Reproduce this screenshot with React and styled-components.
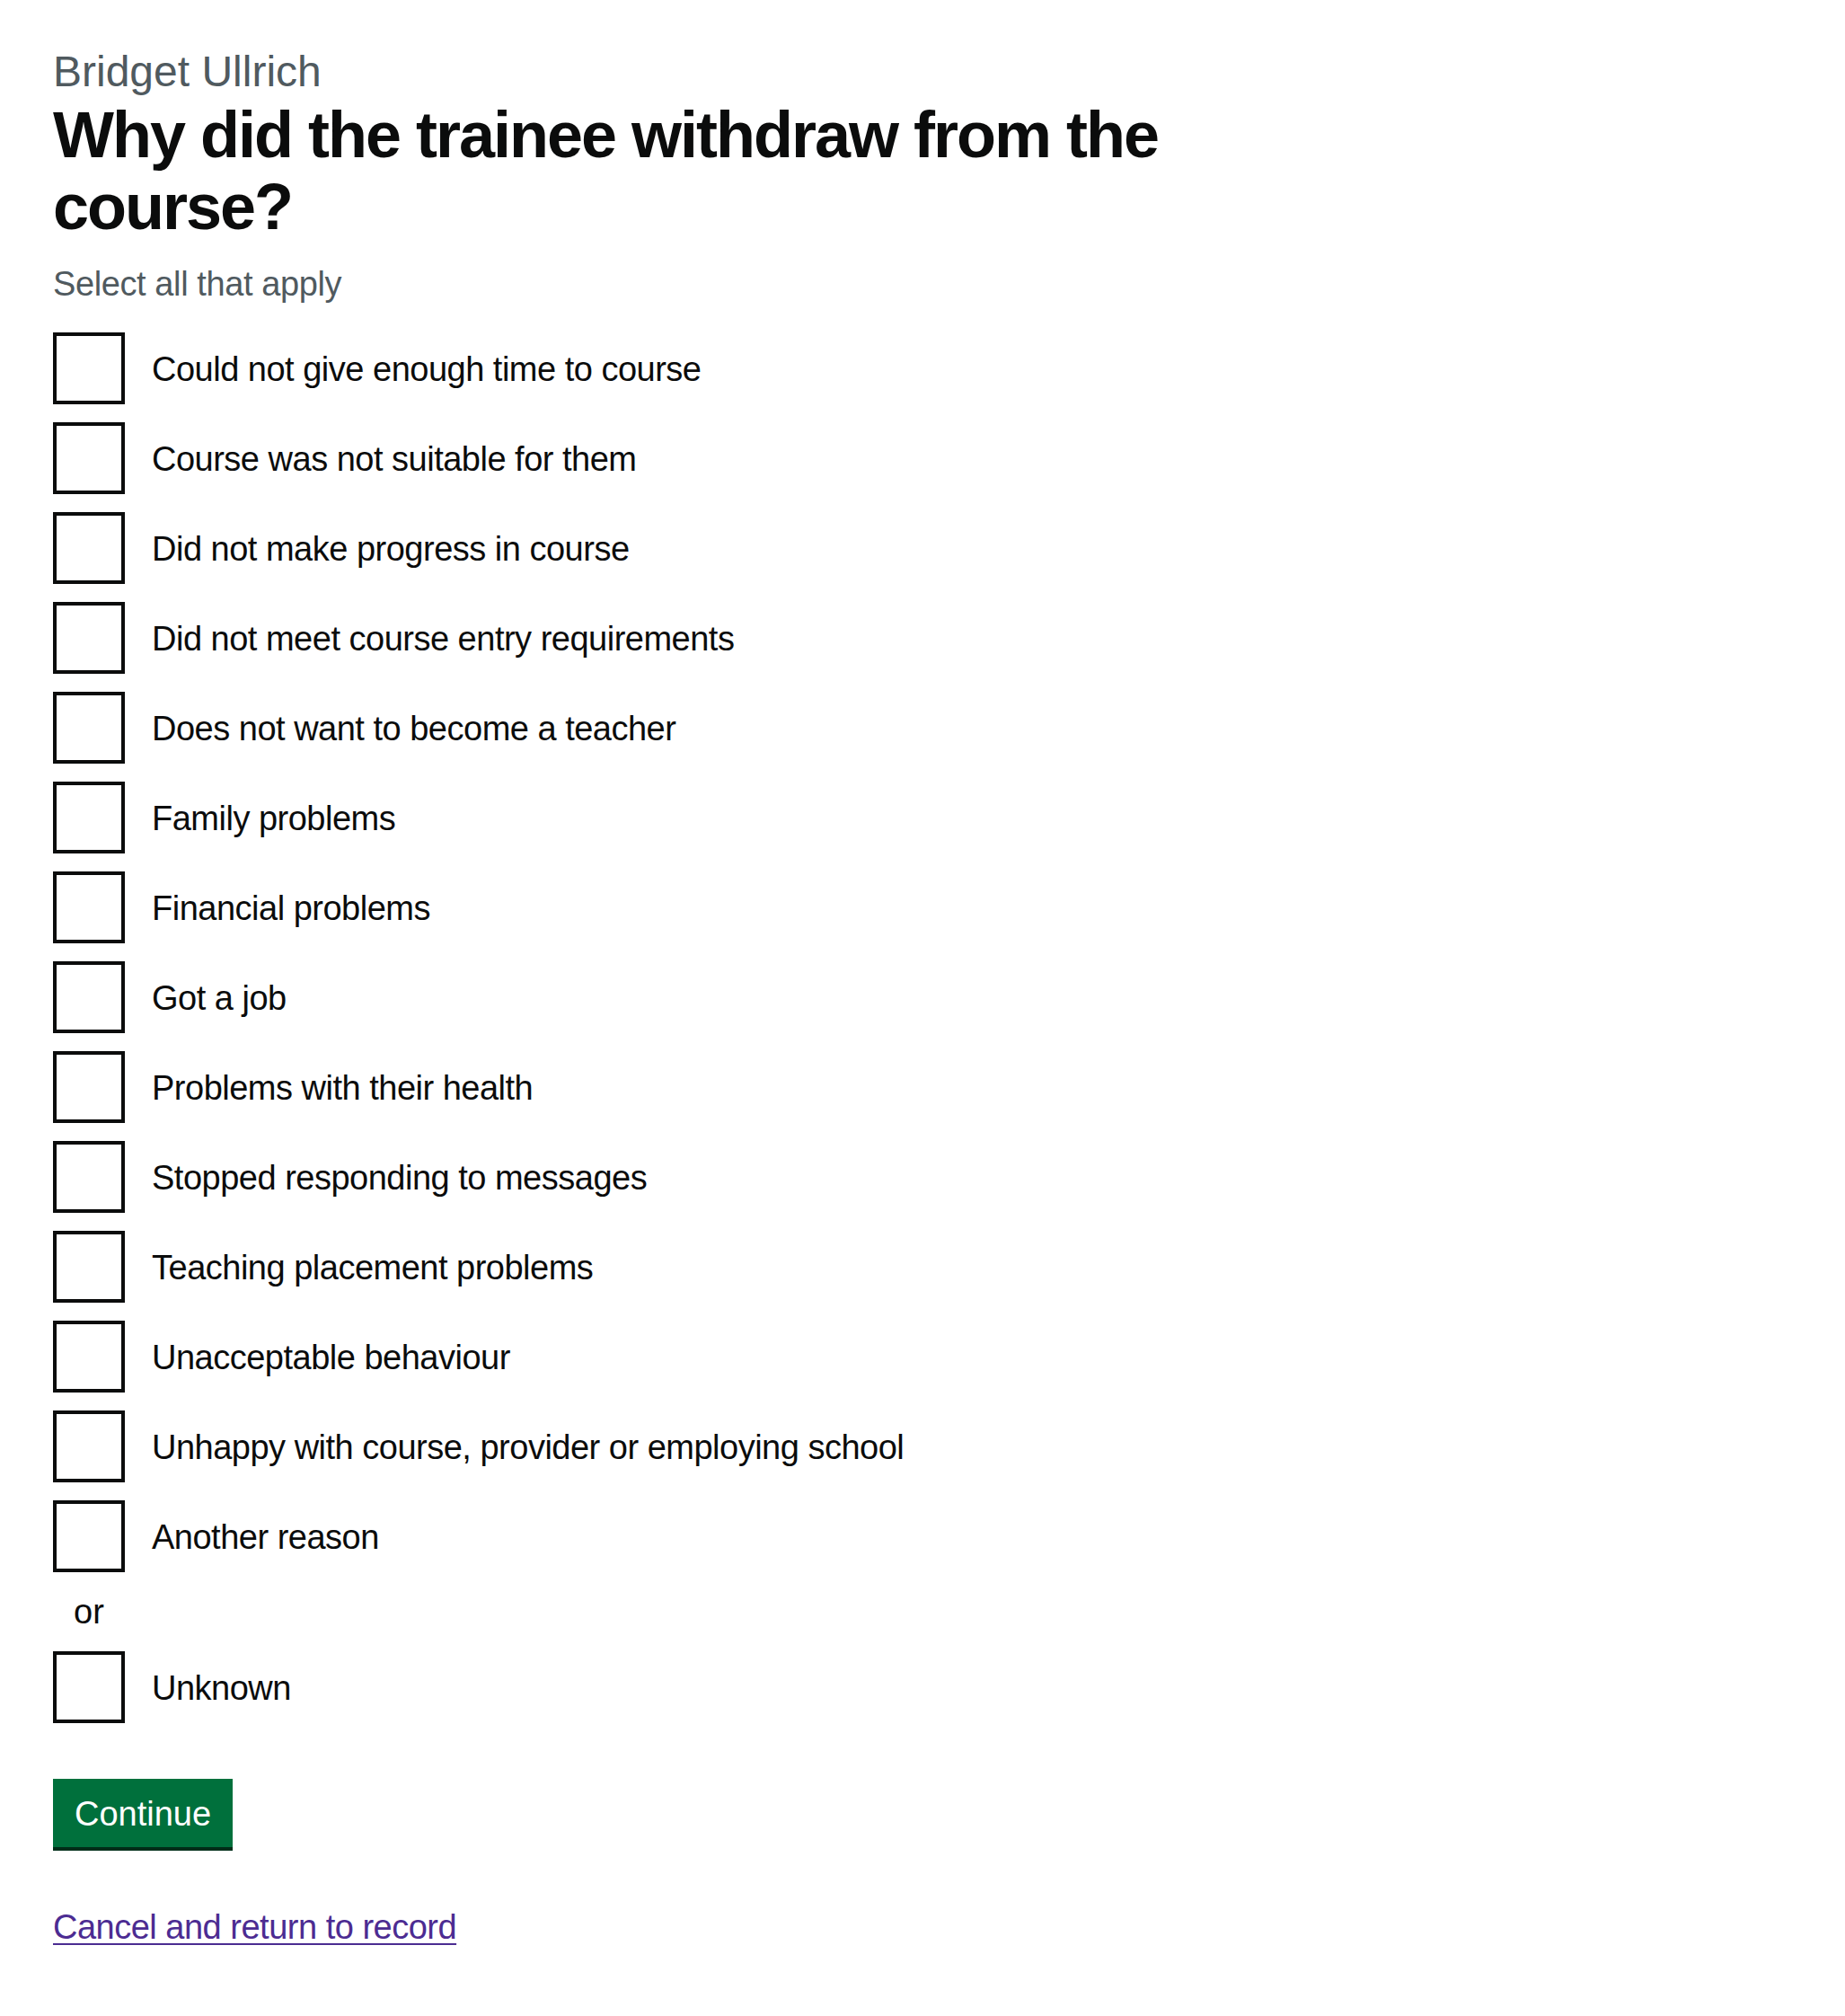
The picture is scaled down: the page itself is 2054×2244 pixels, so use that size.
import React from 'react';
import styled, { createGlobalStyle } from 'styled-components';

const reasons = [
  'Could not give enough time to course',
  'Course was not suitable for them',
  'Did not make progress in course',
  'Did not meet course entry requirements',
  'Does not want to become a teacher',
  'Family problems',
  'Financial problems',
  'Got a job',
  'Problems with their health',
  'Stopped responding to messages',
  'Teaching placement problems',
  'Unacceptable behaviour',
  'Unhappy with course, provider or employing school',
  'Another reason',
];

function App() {
  return (
    <>
      <GlobalStyle />
      <Page>
        <Column>
          <form onSubmit={(e) => e.preventDefault()}>
            <Fieldset>
              <Legend>
                <Caption>Bridget Ullrich</Caption>
                <Heading>Why did the trainee withdraw from the course?</Heading>
              </Legend>
              <Hint>Select all that apply</Hint>
              <Checkboxes>
                {reasons.map((reason, i) => (
                  <Item key={reason}>
                    <Box type="checkbox" id={`reason-${i}`} />
                    <Label htmlFor={`reason-${i}`}>{reason}</Label>
                  </Item>
                ))}
                <Divider>or</Divider>
                <Item>
                  <Box type="checkbox" id="reason-unknown" />
                  <Label htmlFor="reason-unknown">Unknown</Label>
                </Item>
              </Checkboxes>
            </Fieldset>
            <Button type="submit">Continue</Button>
          </form>
          <Para>
            <Link href="#">Cancel and return to record</Link>
          </Para>
        </Column>
      </Page>
    </>
  );
}

// ---- page ----

const GlobalStyle = createGlobalStyle`
  body {
    margin: 0;
    background: #ffffff;
    color: #0b0c0c;
    font-family: "Liberation Sans", Arial, sans-serif;
  }
`;

const Page = styled.main`
  padding: 50px 59px 60px;
`;

const Column = styled.div`
  max-width: 1260px;
`;

const Fieldset = styled.fieldset`
  border: 0;
  margin: 0 0 62px;
  padding: 0;
  min-width: 0;
`;

const Legend = styled.legend`
  padding: 0;
  margin: 0;
`;

const Caption = styled.span`
  display: block;
  font-size: 48px;
  line-height: 60px;
  color: #505a5f;
`;

const Heading = styled.h1`
  margin: 0;
  font-size: 72px;
  line-height: 80px;
  font-weight: 700;
  letter-spacing: -2px;
`;

const Hint = styled.div`
  margin: 21px 0 29px;
  font-size: 38px;
  line-height: 50px;
  color: #505a5f;
  letter-spacing: -0.4px;
`;

const Checkboxes = styled.div`
  display: flex;
  flex-direction: column;
`;

const Item = styled.div`
  display: flex;
  min-height: 80px;
  margin-bottom: 20px;

  &:last-child {
    margin-bottom: 0;
  }
`;

const Box = styled.input`
  appearance: none;
  flex-shrink: 0;
  box-sizing: border-box;
  width: 80px;
  height: 80px;
  margin: 0;
  border: 4px solid #0b0c0c;
  background: #ffffff;
  cursor: pointer;
`;

const Label = styled.label`
  padding: 16px 30px 14px;
  font-size: 38px;
  line-height: 50px;
  letter-spacing: -0.5px;
  cursor: pointer;
`;

const Divider = styled.div`
  width: 80px;
  margin-bottom: 20px;
  text-align: center;
  font-size: 38px;
  line-height: 48px;
`;

const Button = styled.button`
  display: inline-block;
  margin: 0 0 64px;
  padding: 16px 20px 14px;
  border: 4px solid transparent;
  border-radius: 0;
  background: #00703c;
  box-shadow: 0 4px 0 #002d18;
  color: #ffffff;
  font-family: inherit;
  font-size: 38px;
  line-height: 38px;
  cursor: pointer;
`;

const Para = styled.p`
  margin: 0;
  font-size: 38px;
  line-height: 50px;
`;

const Link = styled.a`
  color: #4c2c92;
  letter-spacing: -0.5px;
  text-decoration: underline;
  text-decoration-thickness: 2px;
  text-underline-offset: 5px;
`;

export default App;
